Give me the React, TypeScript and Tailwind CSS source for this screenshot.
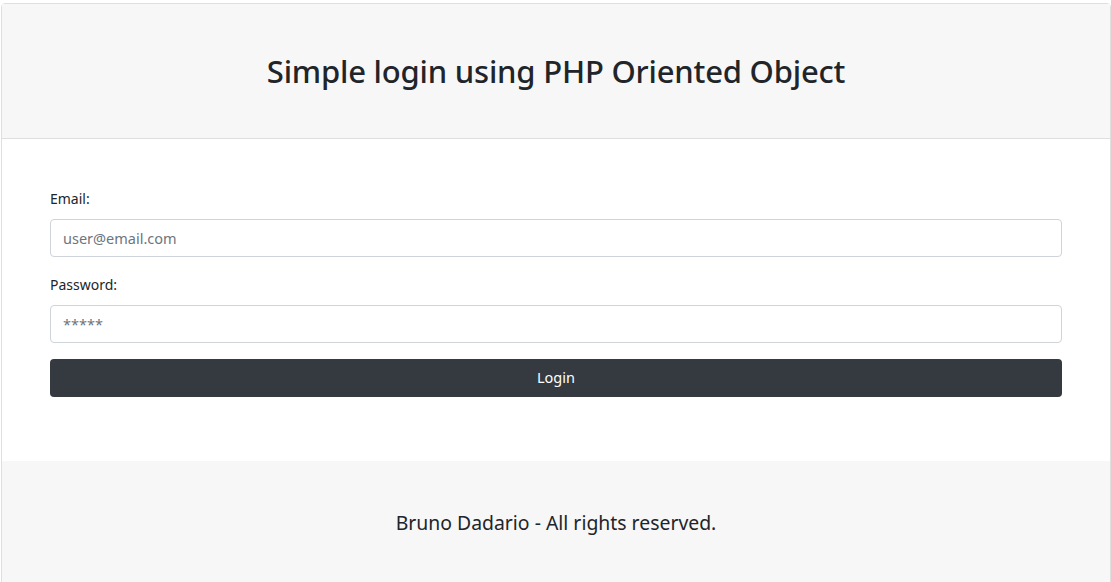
import React from "react";

export default function App() {
  return (
    <div className="w-[1111px] h-[582px] overflow-hidden bg-white pt-[3px] text-[#212529]" style={{ fontFamily: '"Noto Sans", "Open Sans", sans-serif' }}>
      <div className="ml-px w-[1110px] border border-[#dfdfdf] rounded-t-[4px] flex flex-col">
        <div className="bg-[#f7f7f7] border-b border-[#dfdfdf] h-[135px] flex items-center justify-center">
          <h1 className="text-[31px] leading-[38px] font-medium tracking-[-0.2px]">Simple login using PHP Oriented Object</h1>
        </div>
        <div className="px-12 pt-12 pb-[64px] flex flex-col">
          <label className="text-[14px] leading-6 mb-2 text-[#212529]">Email:</label>
          <input
            type="email"
            placeholder="user@email.com"
            className="h-[38px] w-full border border-[#ced4da] rounded-[4px] px-3 text-[14.5px] placeholder:text-[#6c757d] outline-none"
          />
          <label className="text-[14px] leading-6 mb-2 mt-4 text-[#212529]">Password:</label>
          <input
            type="password"
            placeholder="*****"
            className="h-[38px] w-full border border-[#ced4da] rounded-[4px] px-3 text-[14.5px] placeholder:text-[#6c757d] outline-none"
          />
          <button className="mt-4 h-[38px] w-full rounded-[4px] bg-[#343a40] text-white text-[14.5px]">Login</button>
        </div>
        <div className="bg-[#f7f7f7] h-[130px] pt-[50px] flex justify-center">
          <p className="text-[19.4px] leading-6">Bruno Dadario - All rights reserved.</p>
        </div>
      </div>
    </div>
  );
}
